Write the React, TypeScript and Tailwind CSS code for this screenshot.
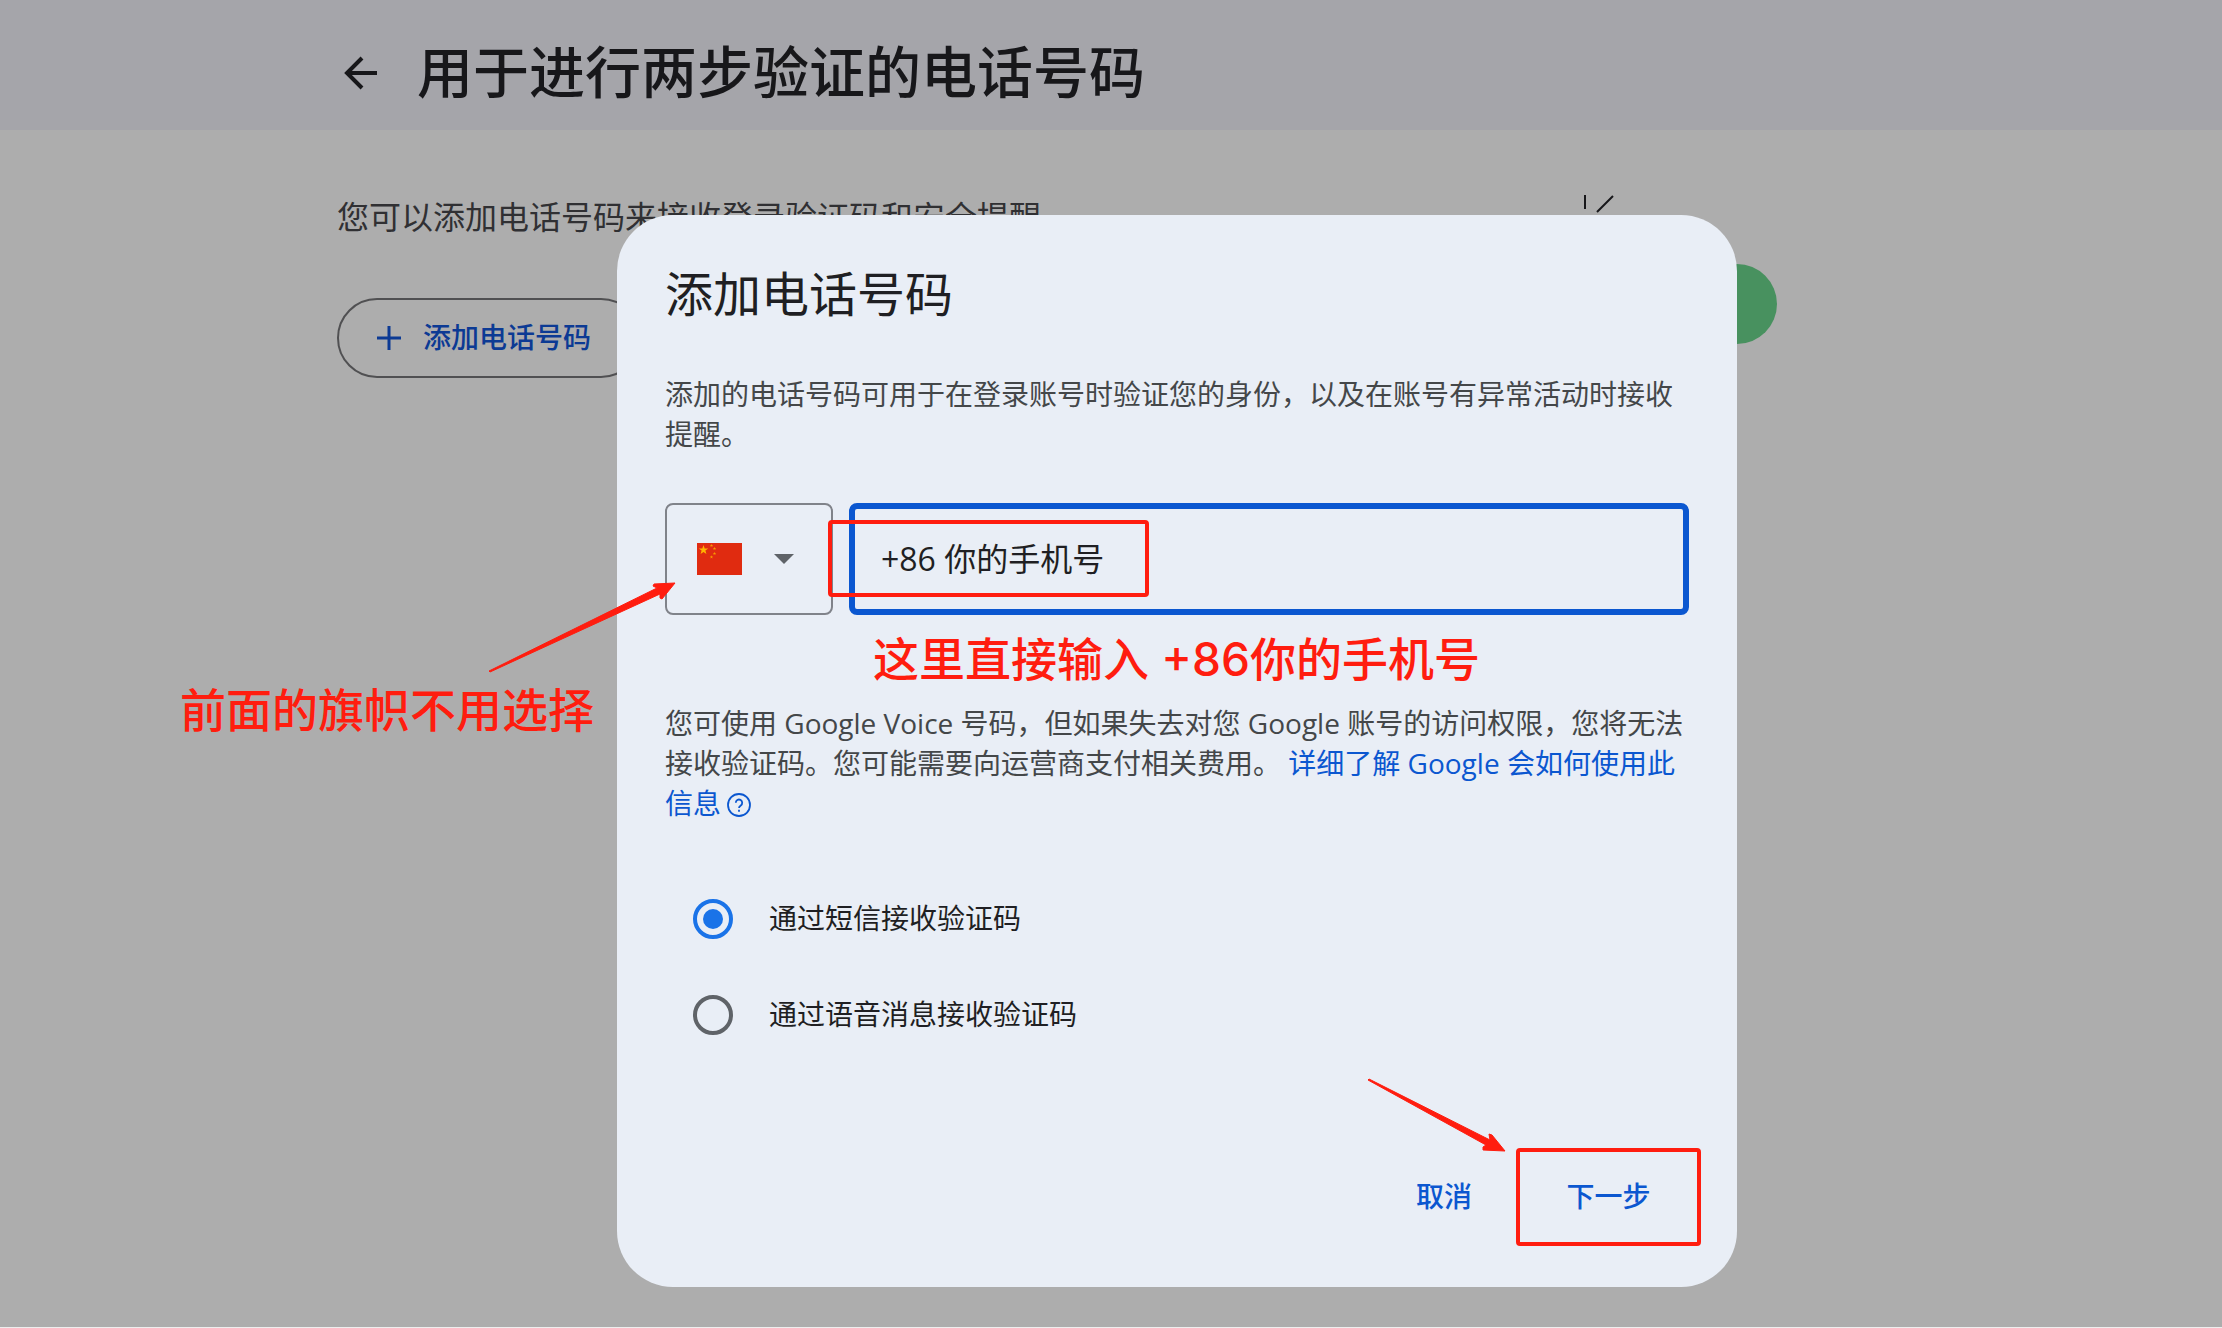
import { useState } from "react";

const star = (cx: number, cy: number, r: number) =>
  Array.from({ length: 10 }, (_, i) => {
    const a = (Math.PI / 5) * i - Math.PI / 2;
    const d = i % 2 ? r * 0.4 : r;
    return `${cx + d * Math.cos(a)},${cy + d * Math.sin(a)}`;
  }).join(" ");

function Flag() {
  return (
    <svg viewBox="0 0 45 32" className="h-8 w-[45px]" aria-hidden="true">
      <rect width="45" height="32" fill="#e02b10" />
      <polygon points={star(6.5, 7, 5)} fill="#ffb300" />
      {[[14.5, 2.5], [17.5, 5.5], [17.5, 10.5], [14.5, 14]].map(([x, y]) => (
        <polygon key={y} points={star(x, y, 1.8)} fill="#f79a00" />
      ))}
    </svg>
  );
}

function Radio(props: { label: string; value: string; current: string; onPick: (v: string) => void }) {
  return (
    <label className="flex h-24 items-center gap-9 pl-7 text-[28px] text-[#1f1f23]">
      <input
        type="radio"
        name="method"
        checked={props.current === props.value}
        onChange={() => props.onPick(props.value)}
        className="grid size-10 appearance-none place-items-center rounded-full border-4 border-[#5f6368] before:size-5 before:rounded-full checked:border-[#1a73e8] checked:before:bg-[#1a73e8]"
      />
      {props.label}
    </label>
  );
}

export default function App() {
  const [method, setMethod] = useState("sms");
  const [phone, setPhone] = useState("+86 你的手机号");

  return (
    <div className="relative min-h-screen overflow-hidden border-b border-[#eeeeee] bg-[#adadad] font-['Inter','Noto_Sans_CJK_SC',sans-serif]">
      <header className="flex h-[130px] items-center gap-8 bg-[#a5a5aa] pt-4 pl-[337px]">
        <button aria-label="返回" className="grid size-12 place-items-center">
          <svg viewBox="0 0 48 48" className="size-12" fill="none" stroke="#17171a" strokeWidth="4" aria-hidden="true">
            <path d="M40 24H11M25 9L10 24l15 15" />
          </svg>
        </button>
        <h1 className="text-[56px] leading-[80px] font-medium text-[#17171a]">用于进行两步验证的电话号码</h1>
      </header>

      <main className="flex justify-between pr-[445px] pl-[337px]">
        <div className="pt-16">
          <p className="text-[32px] leading-[48px] text-[#303033]">您可以添加电话号码来接收登录验证码和安全提醒</p>
          <button className="mt-14 flex h-20 items-center gap-5 rounded-full border-2 border-[#505052] pr-12 pl-9 text-[28px] font-medium text-[#0c3a94]">
            <svg viewBox="0 0 28 28" className="size-7" stroke="currentColor" strokeWidth="3" aria-hidden="true">
              <path d="M14 2v24M2 14h24" />
            </svg>
            添加电话号码
          </button>
        </div>
        <svg viewBox="0 0 240 160" className="mt-[60px] h-[160px] w-[240px]" stroke="#17171a" strokeWidth="2" aria-hidden="true">
          <path d="M48 5v14M60 22L76 6" />
          <circle cx="200" cy="114" r="40" fill="#48915f" stroke="none" />
        </svg>
      </main>

      <div className="absolute inset-0 flex items-start justify-center pt-[215px] pl-[132px]">
        <section role="dialog" aria-labelledby="dialog-title" className="relative w-[1120px] rounded-[56px] bg-[#e9eef6] px-12 pt-12 pb-[41px]">
          <h2 id="dialog-title" className="text-[48px] leading-16 text-[#1f1f23]">添加电话号码</h2>
          <p className="mt-12 text-[28px] leading-10 text-[#444749]">
            添加的电话号码可用于在登录账号时验证您的身份，以及在账号有异常活动时接收提醒。
          </p>

          <div className="mt-12 flex gap-4">
            <button aria-label="国家/地区" className="flex h-28 w-[168px] items-center gap-8 rounded-lg border-2 border-[#80838a] pl-[30px]">
              <Flag />
              <svg viewBox="0 0 20 10" className="h-[10px] w-5" fill="#5f6368" aria-hidden="true">
                <path d="M0 0h20L10 10z" />
              </svg>
            </button>
            <div className="relative min-w-0 grow">
              <input
                aria-label="电话号码"
                value={phone}
                onChange={(e) => setPhone(e.target.value)}
                className="h-28 w-full rounded-lg border-6 border-[#0b57d0] px-[26px] pb-1 font-['Open_Sans','Noto_Sans_CJK_SC',sans-serif] text-[32px] text-[#1f1f23] outline-none"
              />
              <span className="pointer-events-none absolute top-[17px] -left-[21px] h-[77px] w-[321px] rounded-sm border-4 border-[#ff1d0f]" />
            </div>
          </div>

          <p className="mt-3 pl-[208px] text-[46px] leading-16 font-medium text-[#ff1d0f]">这里直接输入 +86你的手机号</p>

          <p className="mt-3 font-['Open_Sans','Noto_Sans_CJK_SC',sans-serif] text-[28px] leading-10 text-[#444749]">
            您可使用 Google Voice 号码，但如果失去对您 Google 账号的访问权限，您将无法接收验证码。您可能需要向运营商支付相关费用。{" "}
            <a href="#" className="text-[#0b57d0]">
              详细了解 Google 会如何使用此信息
              <svg viewBox="0 0 24 24" className="mb-1 ml-1.5 inline size-6" fill="none" stroke="currentColor" strokeWidth="1.8" aria-hidden="true">
                <circle cx="12" cy="12" r="11" />
                <path d="M8.800 9.800a3.200 3.200 0 1 1 5 2.600Q12 13.600 12 15M12 16.800v2" />
              </svg>
            </a>
          </p>

          <fieldset className="mt-12">
            <Radio label="通过短信接收验证码" value="sms" current={method} onPick={setMethod} />
            <Radio label="通过语音消息接收验证码" value="voice" current={method} onPick={setMethod} />
          </fieldset>

          <div className="mt-[85px] -mr-3 flex items-center justify-end gap-11 text-[28px] font-medium text-[#0b57d0]">
            <button>取消</button>
            <button className="h-[98px] w-[185px] rounded-sm border-4 border-[#ff1d0f]">下一步</button>
          </div>

          <svg viewBox="0 0 140 76" className="absolute right-[230px] bottom-[134px] h-[76px] w-[140px]" fill="#ff1d0f" stroke="#ff1d0f" strokeLinejoin="round" aria-hidden="true">
            <path d="M1 3L119 68l-3 2v3l22 1-13-16-3-1 1 6L2 2z" />
          </svg>
        </section>
      </div>

      <p className="absolute top-[678px] left-[180px] text-[46px] leading-16 font-medium text-[#ff1d0f]">前面的旗帜不用选择</p>
      <svg viewBox="0 0 190 94" className="absolute top-[581px] left-[488px] h-[94px] w-[190px]" fill="#ff1d0f" stroke="#ff1d0f" strokeLinejoin="round" aria-hidden="true">
        <path d="M1 90L169 7l-4-2 1-2 21-1-13 16-2-1v-4L2 91z" />
      </svg>
    </div>
  );
}
